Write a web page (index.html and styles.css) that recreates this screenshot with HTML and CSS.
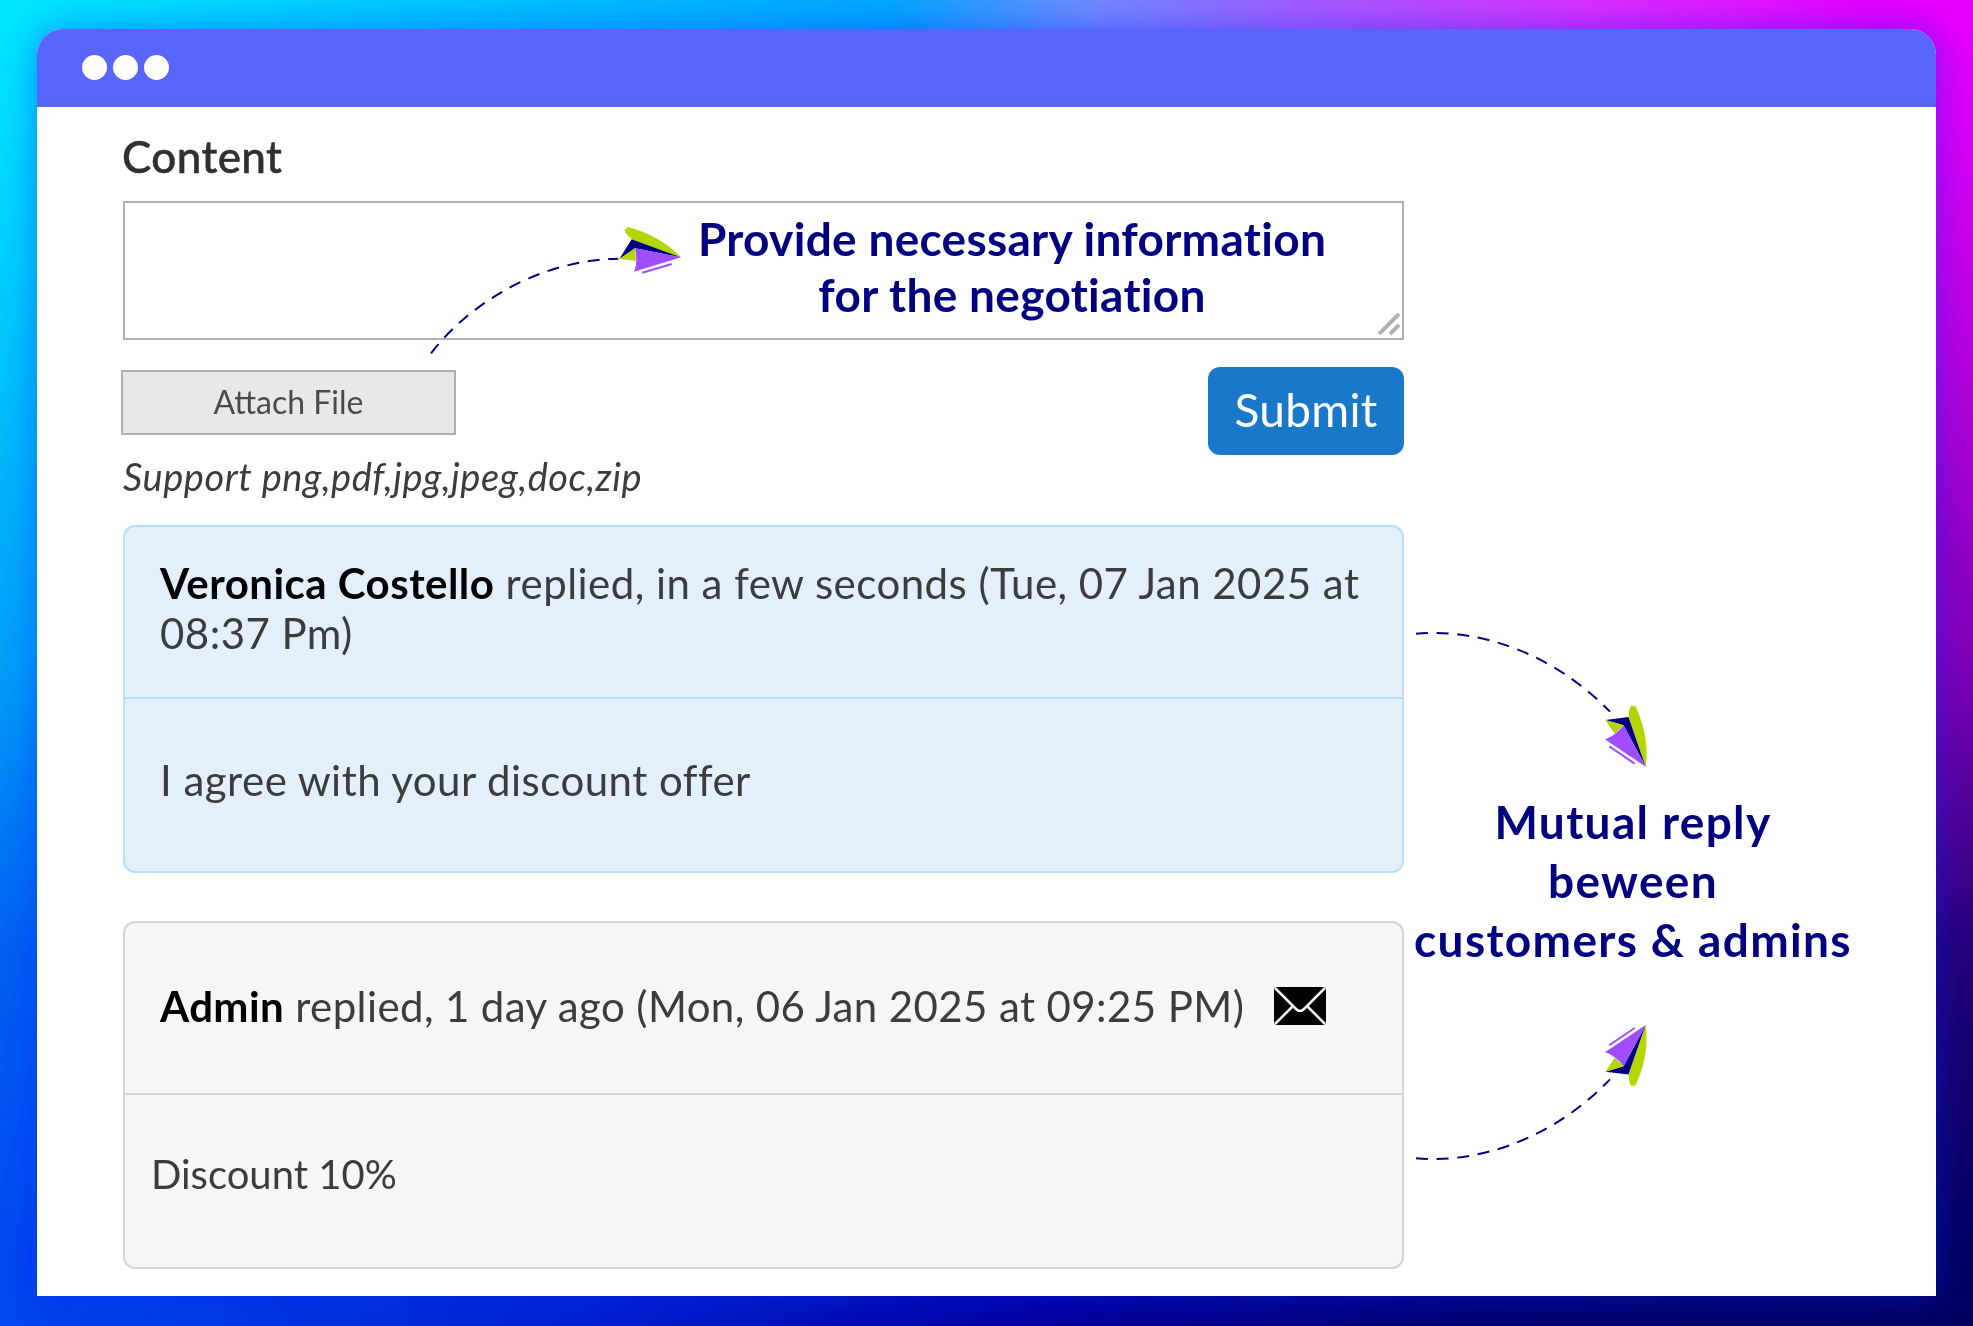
FILE: index.html
```html
<!DOCTYPE html>
<html lang="en">
<head>
    <meta charset="UTF-8">
    <meta name="viewport" content="width=device-width, initial-scale=1.0">
    <title>Negotiation replies</title>
    <link rel="stylesheet" href="styles.css">
</head>
<body>

<svg class="defs" width="0" height="0">
    <!-- Paper plane, drawn pointing right -->
    <symbol id="plane" overflow="visible">
        <path fill="#b3d600" d="M680 110 C740 125 800 155 843 202 L695 148 Z"/>
        <path fill="#b3d600" d="M674 120 C680 112 684 114 688 122 L694 146 C686 140 676 130 674 120 Z"/>
        <path fill="#000080" d="M695 148 L843 202 L705 175 L658 207 Z"/>
        <path fill="#b3d600" d="M658 207 L705 175 L708 212 Z"/>
        <path fill="#a04dff" d="M705 175 L843 202 L702 245 C710 228 711 200 705 175 Z"/>
        <path fill="none" stroke="#a04dff" stroke-width="6" d="M727 248 L815 222"/>
    </symbol>
</svg>

<div class="window">
    <div class="window-bar">
        <span class="dot"></span>
        <span class="dot"></span>
        <span class="dot"></span>
    </div>

    <div class="window-body">
        <div class="thread">
            <label class="field-label">Content</label>

            <div class="textarea-wrap">
                <textarea class="content-input"></textarea>
                <svg class="resize-handle" width="22" height="22" viewBox="0 0 22 22">
                    <path d="M1 21 L21 1 M12 21 L21 12" stroke="#b0b0b0" stroke-width="4" fill="none"/>
                </svg>
                <p class="note-inline">Provide necessary information<br>for the negotiation</p>
                <svg class="arrow-inline" width="320" height="180" viewBox="0 0 960 540">
                    <path class="dash" d="M93 490 C180 375 380 212 655 206"/>
                    <use href="#plane"/>
                </svg>
            </div>

            <div class="actions">
                <button class="attach-btn">Attach File</button>
                <button class="submit-btn">Submit</button>
            </div>
            <p class="support-text">Support png,pdf,jpg,jpeg,doc,zip</p>

            <div class="reply reply-customer">
                <div class="reply-head">
                    <div><b>Veronica Costello</b> replied, in a few seconds (Tue, 07 Jan 2025 at<br>08:37 Pm)</div>
                </div>
                <div class="reply-text">I agree with your discount offer</div>
            </div>

            <div class="reply reply-admin">
                <div class="reply-head">
                    <div><b>Admin</b> replied, 1 day ago (Mon, 06 Jan 2025 at 09:25 PM)</div>
                    <svg class="mail-icon" width="52" height="38" viewBox="0 0 52 38">
                        <rect x="0" y="0" width="52" height="38" rx="3" fill="#000"/>
                        <path d="M1 1 L22 22 Q26 26 30 22 L51 1 M1 37 L18 20 M51 37 L34 20" stroke="#fff" stroke-width="2.5" fill="none"/>
                    </svg>
                </div>
                <div class="reply-text reply-text-admin">Discount 10%</div>
            </div>
        </div>

        <div class="side">
            <svg class="arrow-side" width="300" height="190" viewBox="0 0 900 570">
                <path class="dash" d="M108 71 C300 55 520 130 690 305"/>
                <use href="#plane" transform="translate(797 470) rotate(50.8) translate(-843 -202)"/>
            </svg>
            <p class="side-note">Mutual reply<br>beween<br>customers &amp; admins</p>
            <svg class="arrow-side" width="300" height="190" viewBox="0 0 900 570">
                <path class="dash" d="M108 475 C300 491 520 415 690 238"/>
                <use href="#plane" transform="translate(797 75) scale(1 -1) rotate(50.8) translate(-843 -202)"/>
            </svg>
        </div>
    </div>
</div>

</body>
</html>
```

FILE: styles.css
```css
* {
    box-sizing: border-box;
}

html, body {
    height: 100%;
}

body {
    margin: 0;
    overflow: hidden;
    font-family: "Lato", "Noto Sans", sans-serif;
    font-variant-ligatures: none;
    color: #3c3c3c;
    background: linear-gradient(to right, #0048f0 0%, #0020d0 30%, #0000a0 52%, #000070 75%, #000060 100%);
}

/* Top colours of the backdrop, fading into the bottom ones */
body::before {
    content: "";
    position: fixed;
    inset: 0;
    background: linear-gradient(to right, #00e8ff 0%, #00c8ff 22%, #00a8ff 45%, #6e8cff 55%, #a060ff 65%, #d830ff 80%, #e800ff 95%);
    -webkit-mask-image: linear-gradient(to bottom, #000 0%, rgba(0, 0, 0, 0.85) 20%, rgba(0, 0, 0, 0.55) 50%, rgba(0, 0, 0, 0.15) 72%, transparent 95%);
    mask-image: linear-gradient(to bottom, #000 0%, rgba(0, 0, 0, 0.85) 20%, rgba(0, 0, 0, 0.55) 50%, rgba(0, 0, 0, 0.15) 72%, transparent 95%);
}

.defs {
    position: absolute;
}

.window {
    position: relative;
    margin: 29px 37px 30px;
    height: 1267px;
    background-color: #ffffff;
    border-radius: 26px 26px 0 0;
    box-shadow: 0 0 34px rgba(0, 40, 255, 0.45);
}

.window-bar {
    height: 78px;
    padding: 26px 0 0 45px;
    display: flex;
    gap: 6px;
    background-color: #5865fb;
    border-radius: 26px 26px 0 0;
}

.dot {
    width: 25px;
    height: 25px;
    border-radius: 50%;
    background-color: #ffffff;
}

.window-body {
    display: flex;
    padding-left: 86px;
}

.thread {
    width: 1281px;
    flex-shrink: 0;
}

.field-label {
    display: block;
    margin: 24px 0 20px -1px;
    font-size: 44px;
    line-height: 50px;
    font-weight: 500;
    letter-spacing: 0.4px;
    color: #303030;
    -webkit-text-stroke: 0.5px #303030;
}

.textarea-wrap {
    position: relative;
    height: 139px;
}

.content-input {
    display: block;
    width: 100%;
    height: 100%;
    border: 2px solid #b0b0b0;
    background: #ffffff;
    resize: none;
}

.resize-handle {
    position: absolute;
    right: 4px;
    bottom: 5px;
}

.note-inline {
    position: absolute;
    top: 10px;
    left: 725px;
    width: 328px;
    margin: 0;
    white-space: nowrap;
    display: flex;
    justify-content: center;
    text-align: center;
    font-size: 46px;
    line-height: 56px;
    font-weight: 700;
    letter-spacing: 0.3px;
    color: #000080;
}

.arrow-inline {
    position: absolute;
    left: 277px;
    top: -11px;
}

.dash {
    fill: none;
    stroke: #000080;
    stroke-width: 6;
    stroke-dasharray: 36 26;
}

.actions {
    display: flex;
    justify-content: space-between;
    align-items: flex-start;
    margin-top: 27px;
    height: 88px;
}

.attach-btn {
    width: 335px;
    height: 65px;
    margin: 3px 0 0 -2px;
    padding-bottom: 4px;
    border: 2px solid #b0b0b0;
    background-color: #e8e8e8;
    color: #4a4a4a;
    font-family: inherit;
    font-size: 32px;
}

.submit-btn {
    width: 196px;
    height: 88px;
    padding-bottom: 5px;
    border: none;
    border-radius: 12px;
    background-color: #1a78c8;
    color: #ffffff;
    font-family: inherit;
    font-size: 46px;
    letter-spacing: 0.3px;
}

.support-text {
    margin: -2px 0 26px;
    font-size: 38px;
    line-height: 46px;
    font-style: italic;
    letter-spacing: 0.55px;
}

.reply {
    height: 348px;
    border-radius: 12px;
    border: 2px solid;
    font-size: 42px;
    line-height: 50px;
    letter-spacing: 0.47px;
    margin-bottom: 48px;
}

.reply b {
    font-weight: 700;
    color: #000000;
}

.reply-customer {
    background-color: #e3f0fc;
    border-color: #b6e0fb;
}

.reply-admin {
    background-color: #f5f6f8;
    border-color: #d4d4d4;
    letter-spacing: 0.4px;
}

.reply-head {
    height: 172px;
    padding: 0 35px 9px;
    display: flex;
    align-items: center;
    gap: 30px;
    border-bottom: 2px solid;
    border-color: inherit;
}

.reply-admin .reply-head {
    padding-bottom: 4px;
}

.reply-text {
    height: 172px;
    padding: 0 0 10px 35px;
    display: flex;
    align-items: center;
}

.reply-text-admin {
    padding-left: 26px;
    padding-bottom: 14px;
    font-size: 40px;
    letter-spacing: 0;
}

.mail-icon {
    flex-shrink: 0;
}

.side {
    width: 506px;
    margin-left: -24px;
    padding-top: 503px;
}

.arrow-side {
    display: block;
}

.side-note {
    margin: -8px 0 31px;
    text-align: center;
    white-space: nowrap;
    font-size: 46px;
    line-height: 59px;
    font-weight: 700;
    letter-spacing: 1.35px;
    color: #000080;
}
```
